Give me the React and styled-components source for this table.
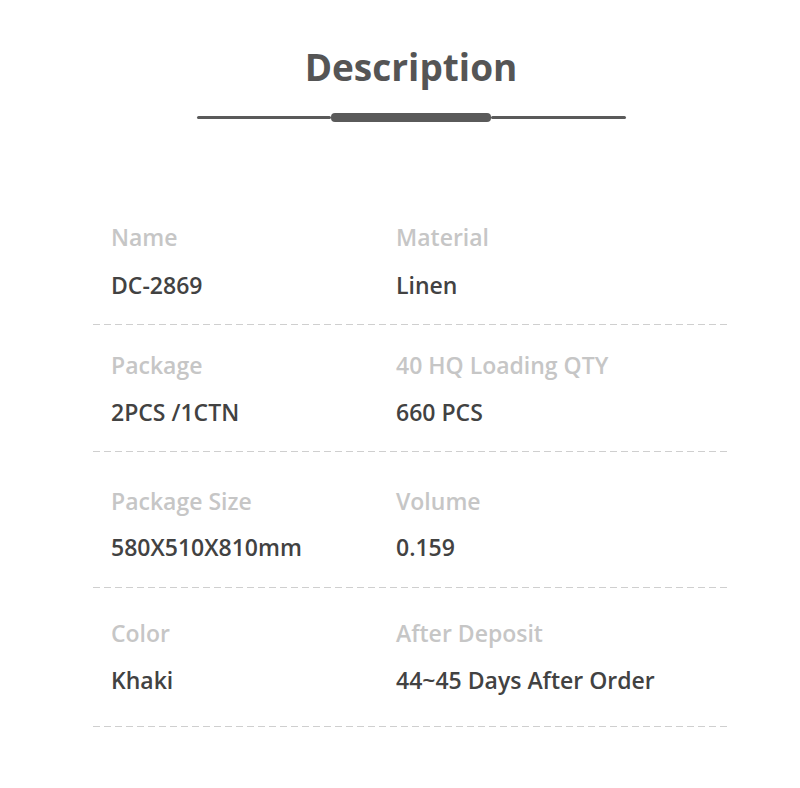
import React from "react";
import styled, { createGlobalStyle } from "styled-components";

const Global = createGlobalStyle`
  html, body { margin: 0; padding: 0; background: #ffffff; }
  body { font-family: "Open Sans", "Noto Sans", "Liberation Sans", sans-serif; }
`;

const Page = styled.div`
  width: 800px;
  height: 788px;
  box-sizing: border-box;
  padding: 47px 50px 0 72px;
  display: flex;
  flex-direction: column;
  align-items: center;
  background: #fff;
`;

const Title = styled.h1`
  margin: 0;
  font-size: 37px;
  line-height: 40px;
  font-weight: 700;
  color: #555555;
  letter-spacing: 0;
`;

const Ornament = styled.div`
  margin-top: 26px;
  display: flex;
  align-items: center;
  width: 429px;
  height: 9px;
`;

const ThinLine = styled.div`
  flex: 1;
  height: 3px;
  border-radius: 2px;
  background: #5a5a5a;
`;

const Pill = styled.div`
  width: 160px;
  height: 9px;
  border-radius: 4px;
  background: #5a5a5a;
`;

const Table = styled.div`
  margin-top: 77px;
  width: 636px;
  display: flex;
  flex-direction: column;
`;

const Row = styled.div`
  display: grid;
  grid-template-columns: 285px 1fr;
  padding: ${(p) => p.$pt}px 0 ${(p) => p.$pb}px 18px;
  row-gap: ${(p) => p.$gap}px;
`;

const Label = styled.div`
  font-size: 23px;
  line-height: 28px;
  font-weight: 600;
  color: #c6c6c6;
  white-space: nowrap;
`;

const Value = styled.div`
  font-size: 23px;
  line-height: 28px;
  font-weight: 600;
  color: #424242;
  white-space: nowrap;
`;

const Dashes = styled.div`
  height: 1px;
  background: repeating-linear-gradient(
    to right,
    #cfcfcf 0,
    #cfcfcf 7px,
    transparent 7px,
    transparent 11px
  );
`;

const rows = [
  { pt: 24, gap: 20, pb: 25, l1: "Name", l2: "Material", v1: "DC-2869", v2: "Linen" },
  { pt: 26, gap: 19, pb: 25, l1: "Package", l2: "40 HQ Loading QTY", v1: "2PCS /1CTN", v2: "660 PCS" },
  { pt: 35, gap: 18, pb: 26, l1: "Package Size", l2: "Volume", v1: "580X510X810mm", v2: "0.159" },
  { pt: 31, gap: 19, pb: 32, l1: "Color", l2: "After Deposit", v1: "Khaki", v2: "44~45 Days After Order" },
];

export default function App() {
  return (
    <>
      <Global />
      <Page>
        <Title>Description</Title>
        <Ornament>
          <ThinLine />
          <Pill />
          <ThinLine />
        </Ornament>
        <Table>
          {rows.map((r) => (
            <React.Fragment key={r.l1}>
              <Row $pt={r.pt} $pb={r.pb} $gap={r.gap}>
                <Label>{r.l1}</Label>
                <Label>{r.l2}</Label>
                <Value>{r.v1}</Value>
                <Value>{r.v2}</Value>
              </Row>
              <Dashes />
            </React.Fragment>
          ))}
        </Table>
      </Page>
    </>
  );
}
